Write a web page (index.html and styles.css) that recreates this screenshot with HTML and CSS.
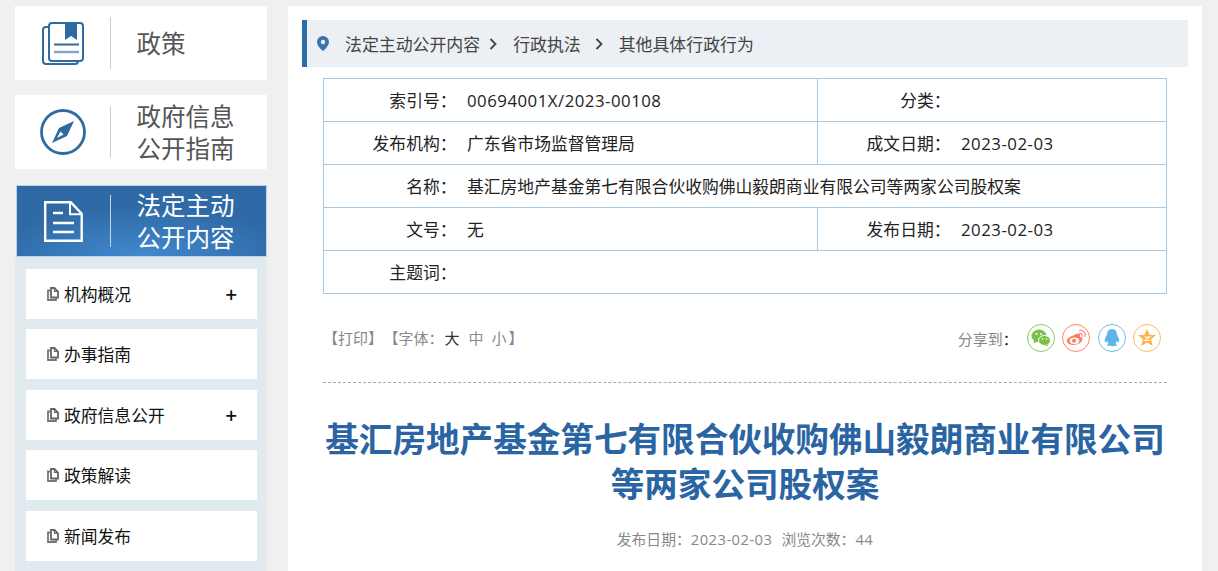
FILE: index.html
```html
<!DOCTYPE html>
<html lang="zh-CN">
<head>
<meta charset="utf-8">
<title>基汇房地产基金第七有限合伙收购佛山毅朗商业有限公司等两家公司股权案</title>
<link rel="stylesheet" href="styles.css">
</head>
<body>
<svg class="defs" width="0" height="0" aria-hidden="true">
  <symbol id="doc" viewBox="0 0 12 14">
    <path d="M4 1h3.500l3.500 3.500v6h-7z" fill="#fff" stroke="#666" stroke-width="1.800"/>
    <path d="M7.500 1v3.500h3.500" fill="none" stroke="#666" stroke-width="1.200"/>
    <path d="M3 3.500h-2v9.500h8v-2.200" fill="none" stroke="#777" stroke-width="1.800"/>
  </symbol>
</svg>
<div class="page">
  <aside class="side">
    <a class="card">
      <span class="card-icon">
        <svg width="42" height="43" viewBox="0 0 42 43">
          <path d="M7 5h-3a3 3 0 0 0-3 3v31a3 3 0 0 0 3 3h29a3 3 0 0 0 3-3" fill="none" stroke="#2f6aa3" stroke-width="2"/>
          <rect x="7" y="1" width="34" height="38" rx="3" fill="#fff" stroke="#2f6aa3" stroke-width="2"/>
          <path d="M23 1h12v17l-6-4-6 4z" fill="#2f6aa3"/>
          <path d="M12 22.500h25" stroke="#2f6aa3" stroke-width="2"/>
          <path d="M12 30h25" stroke="#7fa6c9" stroke-width="2.400"/>
        </svg>
      </span>
      <span class="card-title">政策</span>
    </a>
    <a class="card">
      <span class="card-icon">
        <svg width="46" height="46" viewBox="0 0 46 46">
          <circle cx="23" cy="23" r="21.500" fill="none" stroke="#2f6aa3" stroke-width="2.800"/>
          <path d="M34 12 27 27 12 34 19 19z" fill="#2f6aa3"/>
          <path d="M20.500 22.500 23.500 25.500 17 29z" fill="#fff"/>
        </svg>
      </span>
      <span class="card-title">政府信息<br>公开指南</span>
    </a>
    <a class="card card-active">
      <span class="card-icon">
        <svg width="39" height="41" viewBox="0 0 39 41">
          <path d="M1.200 1.200h25.500l11 11.500v27h-36.500z" fill="none" stroke="#fff" stroke-width="2.400"/>
          <path d="M26 1.200v12h11.500" fill="none" stroke="#fff" stroke-width="2"/>
          <path d="M9 12h10M9 22h21M9 31h21" stroke="#fff" stroke-width="2.400"/>
        </svg>
      </span>
      <span class="card-title">法定主动<br>公开内容</span>
    </a>
    <ul class="menu">
      <li class="menu-item"><svg class="doc" width="12" height="14"><use href="#doc"/></svg><span class="menu-text">机构概况</span><span class="plus">+</span></li>
      <li class="menu-item"><svg class="doc" width="12" height="14"><use href="#doc"/></svg><span class="menu-text">办事指南</span></li>
      <li class="menu-item"><svg class="doc" width="12" height="14"><use href="#doc"/></svg><span class="menu-text">政府信息公开</span><span class="plus">+</span></li>
      <li class="menu-item"><svg class="doc" width="12" height="14"><use href="#doc"/></svg><span class="menu-text">政策解读</span></li>
      <li class="menu-item"><svg class="doc" width="12" height="14"><use href="#doc"/></svg><span class="menu-text">新闻发布</span></li>
    </ul>
  </aside>
  <main class="main">
    <nav class="crumb">
      <svg class="pin" width="12" height="15" viewBox="0 0 12 15">
        <path fill-rule="evenodd" d="M6 0a6 6 0 0 1 6 6c0 3.500-4 7.500-6 9-2-1.500-6-5.500-6-9a6 6 0 0 1 6-6zm0 3.800a2.200 2.200 0 1 0 0 4.400 2.200 2.200 0 0 0 0-4.400z" fill="#3a74a8"/>
      </svg>
      <span>法定主动公开内容</span>
      <svg class="chev" width="9" height="12" viewBox="0 0 9 12"><path d="M1.500 1l5 5-5 5" fill="none" stroke="#444" stroke-width="1.800"/></svg>
      <span>行政执法</span>
      <svg class="chev chev-wide" width="9" height="12" viewBox="0 0 9 12"><path d="M1.500 1l5 5-5 5" fill="none" stroke="#444" stroke-width="1.800"/></svg>
      <span>其他具体行政行为</span>
    </nav>
    <table class="info">
      <colgroup><col class="c-label"><col class="c-value"><col class="c-label"><col></colgroup>
      <tr><th>索引号：</th><td><span class="num">00694001X/2023-00108</span></td><th class="th2">分类：</th><td></td></tr>
      <tr><th>发布机构：</th><td>广东省市场监督管理局</td><th class="th2">成文日期：</th><td><span class="num">2023-02-03</span></td></tr>
      <tr><th>名称：</th><td colspan="3">基汇房地产基金第七有限合伙收购佛山毅朗商业有限公司等两家公司股权案</td></tr>
      <tr><th>文号：</th><td>无</td><th class="th2">发布日期：</th><td><span class="num">2023-02-03</span></td></tr>
      <tr><th>主题词：</th><td colspan="3"></td></tr>
    </table>
    <div class="tools">
      <div class="tools-left">【打印】<span class="font-group">【字体：</span><span class="size-on">大</span><span class="size">中</span><span class="size size-last">小</span>】</div>
      <div class="share">
        <span class="share-label">分享到<b class="colon">：</b></span>
        <span class="share-icon s-wx">
          <svg width="20" height="20" viewBox="0 0 20 20">
            <ellipse cx="8" cy="8" rx="7.500" ry="6.500" fill="#7cc04b"/>
            <path d="M3.500 12l-1 3.500 4-2z" fill="#7cc04b"/>
            <ellipse cx="13.500" cy="12.500" rx="6" ry="5" fill="#7cc04b" stroke="#fff"/>
            <path d="M16 16l1.500 2.500-3.500-1.500z" fill="#7cc04b"/>
            <circle cx="5.500" cy="6" r="1" fill="#fff"/><circle cx="10" cy="6" r="1" fill="#fff"/>
            <circle cx="11.500" cy="11" r=".8" fill="#fff"/><circle cx="15.500" cy="11" r=".8" fill="#fff"/>
          </svg>
        </span>
        <span class="share-icon s-wb">
          <svg width="20" height="20" viewBox="0 0 20 20">
            <path d="M7.500 7.500c4-3 7.500-2 6.500 1.500 3-.2 4 3.500-.5 6.200-4.500 2.700-11.500 2.300-12.500-1.700-.6-2 2.500-5.300 6.500-6z" fill="#ff7a5c"/>
            <ellipse cx="8.500" cy="12.800" rx="4.800" ry="3.200" fill="#fff"/>
            <circle cx="8" cy="12.800" r="2" fill="#ff7a5c"/>
            <path d="M13 2.500a5 5 0 0 1 6 6.500M13 5.500a2.500 2.500 0 0 1 3.200 3.200" fill="none" stroke="#f99" stroke-width="1.400"/>
          </svg>
        </span>
        <span class="share-icon s-qq">
          <svg width="20" height="20" viewBox="0 0 20 20">
            <path d="M10 1c3.500 0 5 2.800 5 6 1.500 2 3 5.500 2 7-.5 .6-1.400-.3-2-1.300-.2 1.300-.8 2.300-1.600 3 1 .4 1.600 1 1.600 1.600 0 1-7.500 1.200-10 0 0-.6.600-1.200 1.600-1.600-.8-.7-1.400-1.700-1.600-3-.6 1-1.500 1.900-2 1.300-1-1.500 .5-5 2-7 0-3.200 1.500-6 5-6z" fill="#5db5ec"/>
          </svg>
        </span>
        <span class="share-icon s-qz">
          <svg width="20" height="20" viewBox="0 0 20 20">
            <path d="M10 1l2.700 6h6.300l-5 4.300 1.800 6.700-5.800-3.500-5.800 3.500 1.800-6.700-5-4.300h6.300z" fill="#ffb340"/>
            <path d="M7.500 9h5l-4.500 3.500h5" fill="none" stroke="#fff" stroke-width="1.200"/>
          </svg>
        </span>
      </div>
    </div>
    <article class="article">
      <h1 class="title">基汇房地产基金第七有限合伙收购佛山毅朗商业有限公司<br>等两家公司股权案</h1>
      <p class="meta"><span>发布日期：<span class="num">2023-02-03</span></span><span>浏览次数：<span class="num">44</span></span></p>
    </article>
  </main>
</div>
</body>
</html>
```
FILE: styles.css
```css
* { box-sizing: border-box; }
html, body { margin: 0; height: 571px; overflow: hidden; }
body {
  background: #f0f0f0;
  font-family: "Noto Sans CJK SC", "Noto Sans", sans-serif;
  color: #333;
}
.defs { position: absolute; }
.num { font-family: "Open Sans", "Noto Sans CJK SC", sans-serif; letter-spacing: .03em; }
.page {
  display: flex;
  align-items: flex-start;
  gap: 21px;
  padding: 6px 0 0 15px;
}
.side { width: 252px; flex: none; }
.card {
  display: flex;
  align-items: center;
  height: 74px;
  margin-bottom: 15px;
  background: #fff;
}
.card-icon {
  width: 96px;
  height: 52px;
  flex: none;
  display: flex;
  align-items: center;
  justify-content: center;
  border-right: 1px solid #ccc;
}
.card-title {
  margin-left: 25.500px;
  font-size: 24.500px;
  line-height: 32px;
  color: #555;
}
.card-active {
  height: 72px;
  margin: 16px 0 0 1px;
  border: 1px solid #b9d3e6;
  background: radial-gradient(ellipse 60% 70% at 50% 100%, #4189cf 0%, #2f6aa6 100%);
}
.card-active .card-icon { width: 94px; border-right-color: #c9d6e2; }
.card-active .card-title { color: #fff; }
.menu {
  list-style: none;
  margin: 0;
  padding: 12px 10px 10px 11px;
  background: #e0eaef;
}
.menu-item {
  display: flex;
  align-items: center;
  height: 50px;
  margin-bottom: 10.450px;
  padding: 0 20px 0 21px;
  background: #fff;
  font-size: 16.800px;
  color: #111;
}
.doc { flex: none; margin-right: 5px; }
.menu-text { flex: 1; }
.plus { font-size: 20px; line-height: 1; font-weight: 500; color: #111; }
.main {
  width: 914px;
  height: 700px;
  flex: none;
  padding: 14px 14px 0;
  background: #fff;
}
.crumb {
  display: flex;
  align-items: center;
  height: 47px;
  padding-left: 10px;
  border-left: 5px solid #2d6ca5;
  background: #eceff3;
  font-size: 16.900px;
  color: #444;
}
.pin { margin-right: 16px; }
.chev { margin: 0 15px 0 9px; }
.chev-wide { margin: 0 15px 0 14px; }
.info {
  width: 844px;
  margin: 11px 0 0 21px;
  border-collapse: collapse;
  table-layout: fixed;
  font-size: 16.800px;
  color: #222;
}
.c-label { width: 133px; }
.c-value { width: 361px; }
.info th, .info td {
  height: 43px;
  padding: 0;
  border-top: 1px solid #a9c9e2;
  border-bottom: 1px solid #a9c9e2;
  font-weight: 400;
}
.info th { text-align: right; }
.info td { padding-left: 10.500px; }
.info th:first-child { border-left: 1px solid #a9c9e2; }
.info td:last-child { border-right: 1px solid #a9c9e2; }
.info .th2 { border-left: 1px solid #a9c9e2; }
.tools {
  display: flex;
  align-items: center;
  justify-content: space-between;
  width: 844px;
  height: 89px;
  margin-left: 21px;
  padding: 0 6px 0 0;
  border-bottom: 1px dashed #aaa;
  font-size: 15px;
  color: #888;
}
.tools-left { margin-bottom: 1px; }
.font-group { margin-left: 8px; }
.size-on { color: #333; margin: 0 9px 0 1px; }
.size { margin-right: 8px; }
.size-last { margin-right: 2px; }
.share { display: flex; align-items: center; gap: 7.330px; }
.share-label { margin-right: 2px; }
.colon { font-weight: 400; color: #222; }
.share-icon {
  width: 28px;
  height: 28px;
  display: flex;
  align-items: center;
  justify-content: center;
  border: 1px solid;
  border-radius: 50%;
  background: #fff;
}
.s-wx { border-color: #8bc860; }
.s-wb { border-color: #ff8560; }
.s-qq { border-color: #6dbcec; }
.s-qz { border-color: #ffbe50; }
.article { width: 844px; margin-left: 21px; text-align: center; }
.title {
  margin: 32px 0 0;
  font-size: 33.600px;
  line-height: 45px;
  font-weight: 700;
  color: #2a64a3;
}
.meta {
  display: flex;
  justify-content: center;
  gap: 9px;
  margin: 23px 0 0;
  font-size: 14.800px;
  color: #888;
}
```
